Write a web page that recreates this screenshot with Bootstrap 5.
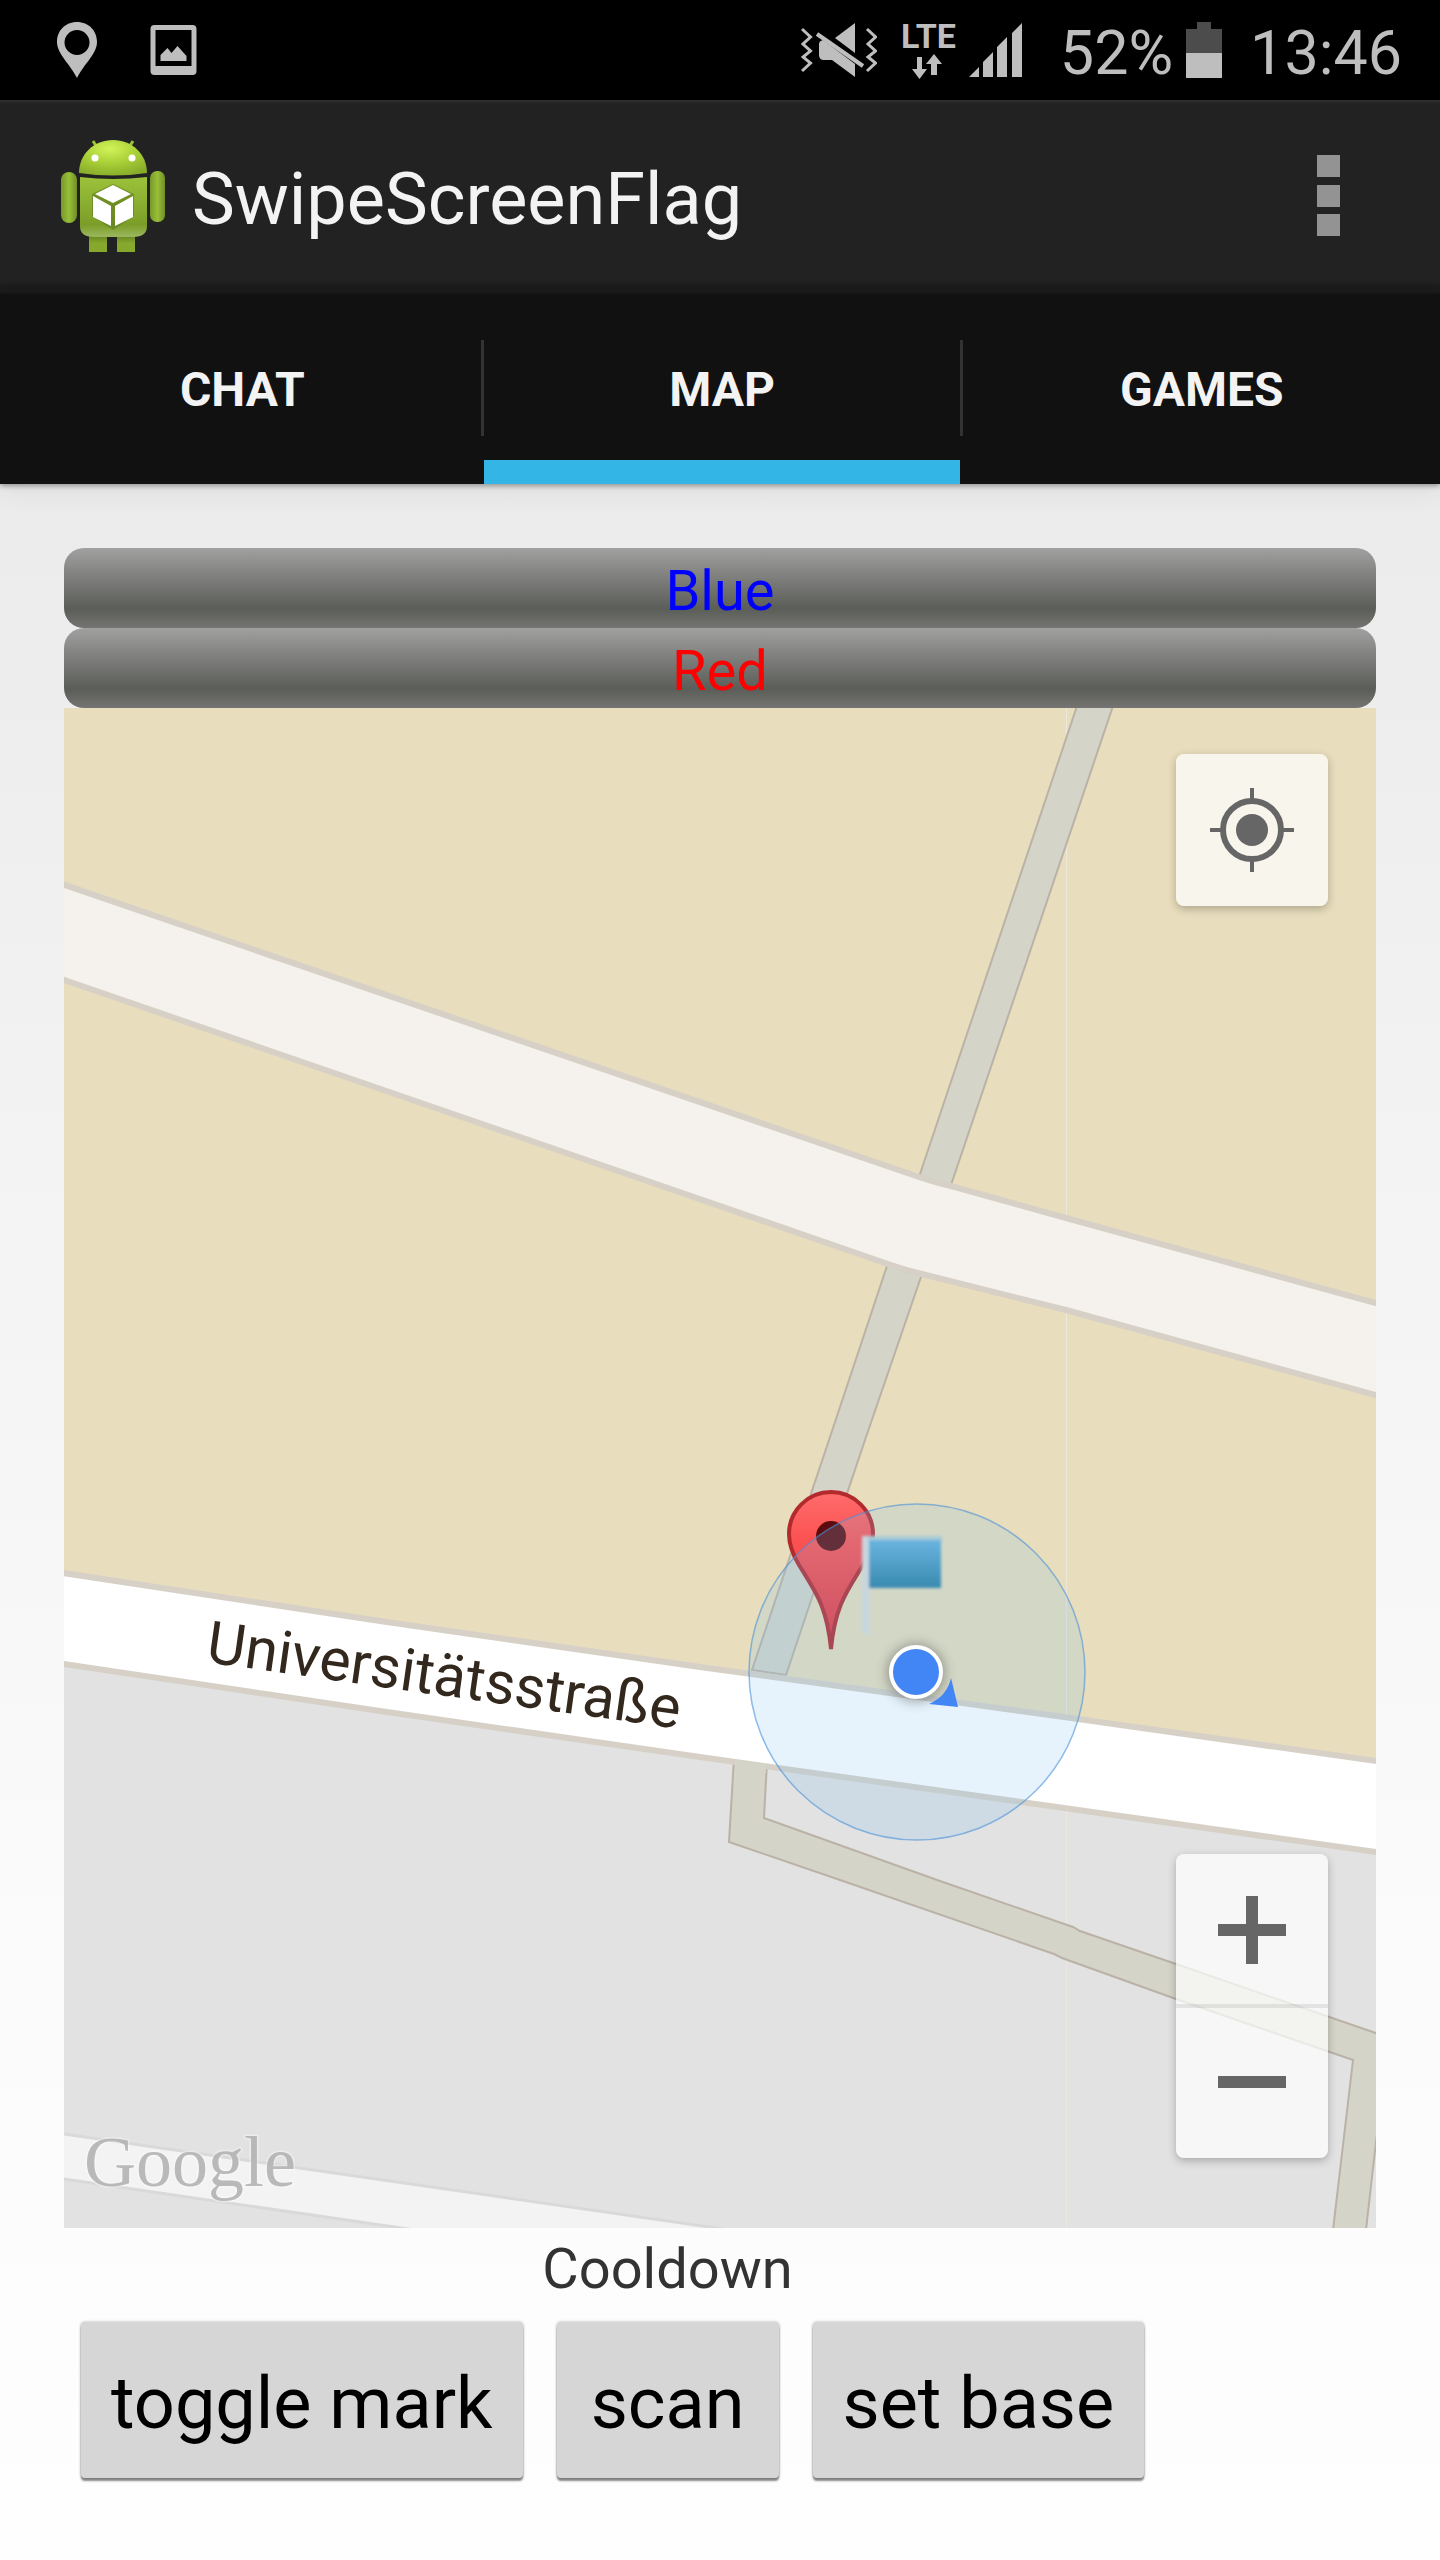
<!DOCTYPE html>
<html lang="en">
<head>
<meta charset="utf-8">
<meta name="viewport" content="width=device-width, initial-scale=1">
<title>SwipeScreenFlag</title>
<link href="https://cdn.jsdelivr.net/npm/bootstrap@5.3.0/dist/css/bootstrap.min.css" rel="stylesheet">
<style>
  body { font-family: Roboto, "Noto Sans", sans-serif; background: #fefefe; color: #333; }
  svg { display: block; flex: none; }
  .status-bar { height: 100px; padding: 0 38px 0 57px; background: #000; color: #bebebe; font-size: 61px; line-height: 100px; }
  .status-text { padding-top: 6px; line-height: 94px; }
  .net-type { font-size: 34px; line-height: 32px; font-weight: 700; }
  .gap-a { margin-left: 13px; }
  .gap-b { margin-left: 24px; }
  .gap-c { margin-left: 34px; }
  .action-bar { height: 196px; padding: 0 100px 4px 60px; color: #f3f3f3;
    background: linear-gradient(#303030, #222 4px, #222 180px, #1b1b1b 186px, #1b1b1b 192px, #111); }
  .app-title { font-size: 72px; line-height: 84px; color: #f3f3f3; font-weight: 400; padding: 8px 0 0 26px; }
  .menu-btn { padding: 0; border: 0; background: none; }
  .tab-strip { height: 188px; padding-left: 4px; background: #111; position: relative; z-index: 1; box-shadow: 0 2px 5px rgba(0,0,0,.35), 0 8px 24px rgba(0,0,0,.06); }
  .tab-link { flex: 1 1 0; display: flex; align-items: center; justify-content: center; height: 188px; border-bottom: 24px solid transparent; padding-top: 24px;
    color: #f3f3f3; font-size: 48px; line-height: 56px; font-weight: 700; text-decoration: none; }
  .tab-link.active { border-bottom-color: #33b5e5; }
  .tab-rule { width: 3px; height: 96px; margin-top: 44px; background: #333; }
  .page-body { background: linear-gradient(#ebebeb, #f0f0f0 20%, #f7f7f7 52%, #fcfcfc 78%, #fefefe); padding: 64px 64px 0; min-height: calc(100vh - 484px); }
  .team-bar { border-radius: 20px; padding-top: 6px; font-size: 56px; line-height: 74px; text-align: center;
    background: linear-gradient(#a0a0a0, #5b5d58 76%, #747572); }
  .team-blue { color: #00f; }
  .team-red { color: #f00; }
  .map-ctl { width: 152px; height: 152px; padding: 0; border: 0; background: rgba(255,255,255,.71); display: flex; align-items: center; justify-content: center; }
  .map-ctl-box { right: 48px; border-radius: 8px; overflow: hidden; box-shadow: 0 3px 8px rgba(0,0,0,.25); }
  .locate-box { top: 46px; }
  .zoom-box { bottom: 70px; }
  .zoom-in { box-shadow: inset 0 -2px rgba(0,0,0,.08); }
  .zoom-out { box-shadow: inset 0 2px rgba(0,0,0,.08); }
  .control-grid { display: grid; grid-template-columns: auto auto auto; justify-content: start; column-gap: 34px; padding: 3px 0 0 17px; }
  .cooldown { grid-column: 2; font-size: 56px; line-height: 76px; text-align: center; margin: 0 -20px 15px; }
  .holo-btn { min-width: 222px; height: 156px; border: 0; border-radius: 4px; padding: 8px 30px 0; font-size: 72px; line-height: 84px; color: #000; background: #d6d6d6; box-shadow: 0 3px 2px rgba(0,0,0,.45), 0 0 3px rgba(0,0,0,.3); }
  .holo-first { grid-column: 1; }
</style>
<script src="https://cdn.jsdelivr.net/npm/bootstrap@5.3.0/dist/js/bootstrap.bundle.min.js"></script>
</head>
<body class="min-vh-100">

<div class="status-bar d-flex align-items-center justify-content-between">
  <div class="d-flex align-items-center">
    <svg width="40" height="56" viewBox="0 0 40 56" aria-hidden="true"><path fill="#bebebe" fill-rule="evenodd" d="M20 0C8 0 0 9 0 20c0 12 13 22 20 36 7-14 20-24 20-36C40 9 32 0 20 0zm0 8a12.500 12.500 0 1 1 0 25 12.500 12.500 0 0 1 0-25z"/></svg>
    <svg class="ms-5" width="56" height="50" viewBox="-3 0 51 50" aria-hidden="true"><path fill="#bebebe" fill-rule="evenodd" d="M4 0h38q4 0 4 4v42q0 4-4 4H4q-4 0-4-4V4q0-4 4-4zm1 5v36h36V5zM10 36V30l7-7 4 5 6-7 9 10v5z"/></svg>
  </div>
  <div class="d-flex align-items-center">
    <svg width="76" height="56" viewBox="0 0 76 56" aria-hidden="true">
      <g fill="none" stroke="#bebebe" stroke-width="3"><path d="M1 7l8.500 8-7.500 7 7.500 7-7.500 6 7.500 6L1 49M66 7l8.500 8-7.500 7 7.500 7-7.500 6 7.500 6L66 49"/><path stroke-width="4" d="M16 12l46 32"/></g>
      <path fill="#bebebe" d="M34 16L54 1v30zM22 18L54 42v13L31 38h-8q-5 0-5-5V22q0-3 4-4z"/>
    </svg>
    <div class="gap-b d-flex flex-column align-items-center">
      <span class="net-type">LTE</span>
      <svg width="32" height="28" viewBox="0 0 32 28" aria-hidden="true"><path fill="#bebebe" d="M5 5h5v12h5L7.500 27 0 17h5zM19 23V12h-5l8-10 8 10h-5v11z"/></svg>
    </div>
    <svg class="gap-a" width="53" height="54" viewBox="0 0 53 54" aria-hidden="true"><path fill="#bebebe" d="M0 54l10-10v10zM14 54V39l10-10v25zM28 54V24l10-10v40zM43 54V10L53 0v54z"/></svg>
    <span class="status-text gap-c ps-1">52%</span>
    <svg class="gap-a" width="36" height="56" viewBox="0 0 36 56" aria-hidden="true"><path fill="#4c4c4c" d="M11 0h14v7h11v24H0V7h11z"/><path fill="#bebebe" d="M0 31h36v25H0z"/></svg>
    <span class="status-text gap-b ps-1">13:46</span>
  </div>
</div>

<header class="action-bar d-flex align-items-center justify-content-between">
  <div class="d-flex align-items-center">
    <svg width="106" height="112" viewBox="0 0 106 112" role="img" aria-label="App icon">
      <defs>
        <linearGradient id="bodyG" x2="0" y2="1"><stop stop-color="#9cc23a"/><stop offset=".8" stop-color="#7b9d28"/><stop offset="1" stop-color="#9cb860"/></linearGradient>
        <radialGradient id="headG" cx=".45" cy=".25" r=".8"><stop stop-color="#d2f35a"/><stop offset=".5" stop-color="#a9d037"/><stop offset="1" stop-color="#86aa2a"/></radialGradient>
        <linearGradient id="armG"><stop stop-color="#77992a"/><stop offset=".5" stop-color="#98bf38"/><stop offset="1" stop-color="#6f8f25"/></linearGradient>
        <linearGradient id="legG" x2="0" y2="1"><stop stop-color="#4f691a"/><stop offset=".6" stop-color="#86a92d"/></linearGradient>
      </defs>
      <path d="M33 1l5 8M73 1l-5 8" stroke="#9cc23a" stroke-width="3"/>
      <path fill="url(#legG)" d="M29 90h18v22H29zM57 90h18v22H57z"/>
      <path fill="url(#headG)" d="M19 33C19 14 34 0 53 0s34 14 34 33q-34 5-68 0z"/>
      <path fill="url(#bodyG)" d="M20 37q33 4 67 0v49q0 11-14 11H34q-14 0-14-11z"/>
      <rect x="1" y="32" width="16" height="51" rx="8" fill="url(#armG)"/>
      <rect x="90" y="31" width="15" height="51" rx="7" fill="url(#armG)"/>
      <circle cx="35" cy="18" r="3.500" fill="#fff"/><circle cx="72" cy="18" r="3.500" fill="#fff"/>
      <path fill="#5d7a1e" opacity=".6" d="M32 54l21-10 21 10v22L53 90 32 76z"/>
      <path fill="#fff" d="M53 45l18 9-18 9-18-9zM33 56l18 10v20L33 77zM73 56L55 66v20l18-9z"/>
    </svg>
    <h1 class="app-title mb-0">SwipeScreenFlag</h1>
  </div>
  <button class="menu-btn" type="button" aria-label="More options"><svg width="23" height="82" viewBox="0 0 23 82"><path fill="#939393" d="M0 0h23v22H0zM0 30h23v22H0zM0 59h23v22H0z"/></svg></button>
</header>

<nav class="tab-strip d-flex">
  <a class="tab-link" href="#chat">CHAT</a>
  <span class="tab-rule"></span>
  <a class="tab-link active" href="#map" aria-current="page">MAP</a>
  <span class="tab-rule"></span>
  <a class="tab-link" href="#games">GAMES</a>
</nav>

<main class="page-body">
  <div class="team-bar team-blue">Blue</div>
  <div class="team-bar team-red">Red</div>

  <div class="position-relative" id="map">
    <svg class="w-100 h-auto" viewBox="64 708 1312 1520" role="img" aria-label="Map of Universitätsstraße">
      <defs>
        <linearGradient id="pinG" x2="0" y2="1"><stop stop-color="#ff6c6c"/><stop offset=".3" stop-color="#fc5252"/><stop offset="1" stop-color="#e0323c"/></linearGradient>
        <linearGradient id="flagG" x2="0" y2="1"><stop stop-color="#6ab4e0"/><stop offset="1" stop-color="#388ab0"/></linearGradient>
        <filter id="soft" x="-30%" y="-30%" width="160%" height="160%"><feGaussianBlur stdDeviation="1.500"/></filter>
        <filter id="dotShadow" x="-50%" y="-50%" width="200%" height="200%"><feGaussianBlur stdDeviation="6"/></filter>
      </defs>
      <rect x="64" y="708" width="1312" height="1520" fill="#e8ddbc"/>
      <path fill="#e2e2e2" d="M64 1664L700 1757 1060 1808 1376 1852V2228H64z"/>
      <!-- tile seam -->
      <path stroke="#ece8de" d="M1066.500 708V2228"/>
      <!-- footpaths -->
      <g fill="#d4d4c8" stroke="#bab2a6" stroke-width="2">
        <path d="M1077 706L919 1177 888 1263 829 1440 752 1670 786 1675 865 1440 922 1274 951 1185 1113 706z"/>
        <path d="M734 1758L729 1842 840 1880 1054 1954 1062 1958 1176 1999 1353 2060 1333 2230H1366L1376 2142 1390 2038 1176 1964 1080 1931 1073 1927 940 1881 764 1818 767 1762z"/>
      </g>
      <!-- streets -->
      <g stroke="#d7d0c7" stroke-width="6">
        <path fill="#f5f2ed" d="M50 880L919 1177Q940 1184 951 1186L1066 1218 1390 1307V1399L1066 1310 922 1274Q905 1270 888 1264L50 975z"/>
        <path fill="#fff" d="M50 1571L380 1621 700 1667 1064 1717 1390 1763V1854L1064 1808 700 1757 380 1711 50 1662z"/>
        <path fill="#f3f3f3" stroke="#d9d9d9" stroke-width="3" d="M50 2132L730 2230H415L50 2177z"/>
      </g>
      <path fill="#d4d4c8" d="M735 1760L766 1764V1773H735z"/>
      <text transform="translate(205 1662) rotate(8)" font-size="59" fill="#33281e">Universitätsstraße</text>
      <!-- marker -->
      <path fill="url(#pinG)" stroke="#b32a2d" stroke-width="4" d="M831 1492a42 42 0 0 0-42 42c0 12 4 21 10 31 16 26 28 41 32 84 4-43 16-58 32-84 6-10 10-19 10-31a42 42 0 0 0-42-42z"/>
      <circle cx="831" cy="1536" r="15" fill="#5c0b0e"/>
      <circle cx="917" cy="1672" r="168" fill="#82c3f0" fill-opacity=".2" stroke="#4791d8" stroke-opacity=".6" stroke-width="1.500"/>
      <g filter="url(#soft)">
        <path fill="#c8d6dd" d="M862 1536h8v98h-8z"/>
        <path fill="#a9ccd6" d="M868 1536h74v6h-74z"/>
        <rect x="869" y="1540" width="72" height="48" fill="url(#flagG)"/>
      </g>
      <circle cx="916" cy="1673" r="29" fill="#333" opacity=".4" filter="url(#dotShadow)"/>
      <circle cx="916" cy="1672" r="25" fill="#4285f4" stroke="#fff" stroke-width="4"/>
      <path fill="#4285f4" d="M951 1678L958 1707 929 1704Q947 1696 951 1678z"/>
      <text x="84" y="2186" font-family="Liberation Serif, serif" font-size="72" fill="#b3b3b3" fill-opacity=".9" stroke="#fff" stroke-opacity=".35" stroke-width="3" paint-order="stroke">Google</text>
    </svg>

    <div class="map-ctl-box locate-box position-absolute">
      <button class="map-ctl" type="button" aria-label="My location"><svg width="84" height="84" viewBox="0 0 84 84"><circle cx="42" cy="42" r="16" fill="#666"/><circle cx="42" cy="42" r="29" fill="none" stroke="#666" stroke-width="6"/><path stroke="#666" stroke-width="4" d="M42 0v12M42 72v12M0 42h12M72 42h12"/></svg></button>
    </div>
    <div class="map-ctl-box zoom-box position-absolute">
      <button class="map-ctl zoom-in" type="button" aria-label="Zoom in"><svg width="68" height="68" viewBox="0 0 68 68"><path fill="#666" d="M28 0h12v28h28v12H40v28H28V40H0V28h28z"/></svg></button>
      <button class="map-ctl zoom-out" type="button" aria-label="Zoom out"><svg width="68" height="12" viewBox="0 0 68 12"><path fill="#666" d="M0 0h68v12H0z"/></svg></button>
    </div>
  </div>

  <div class="control-grid">
    <div class="cooldown">Cooldown</div>
    <button class="holo-btn holo-first" type="button">toggle mark</button>
    <button class="holo-btn" type="button">scan</button>
    <button class="holo-btn" type="button">set base</button>
  </div>
</main>
</body>
</html>
